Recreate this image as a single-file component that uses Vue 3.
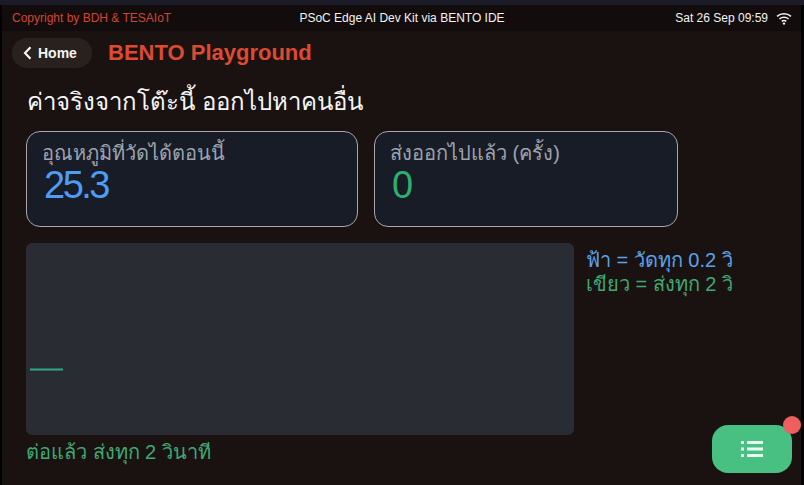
<template>
  <div class="screen">
    <div class="status">
      <span class="copy">Copyright by BDH &amp; TESAIoT</span>
      <span class="device">PSoC Edge AI Dev Kit via BENTO IDE</span>
      <span class="clock">
        Sat 26 Sep 09:59
        <svg width="16" height="13" viewBox="0 0 16 13" fill="none" stroke="#f2f2f2" stroke-width="1.5">
          <path d="M1 4.4C5 .9 11 .9 15 4.4" />
          <path d="M3.4 7C6 4.8 10 4.8 12.6 7" />
          <path d="M5.7 9.4C7 8.4 9 8.4 10.3 9.4" />
          <circle cx="8" cy="11.6" r="1.2" fill="#f2f2f2" stroke="none" />
        </svg>
      </span>
    </div>

    <div class="nav">
      <button class="home">
        <svg width="9" height="14" viewBox="0 0 9 14" fill="none" stroke="#f4f4f4" stroke-width="2.2">
          <path d="M7.5 1.2 2 7l5.500 5.800" />
        </svg>
        Home
      </button>
      <span class="title">BENTO Playground</span>
    </div>

    <main class="content">
      <h1>{{ heading }}</h1>
      <div class="cards">
        <div class="card" v-for="card in cards" :key="card.label" :class="card.kind">
          <p class="label">{{ card.label }}</p>
          <p class="value">{{ card.value }}</p>
        </div>
      </div>
      <div class="chart-row">
        <div class="chart">
          <svg width="548" height="192" viewBox="0 0 548 192">
            <path d="M4 126.500H37" stroke="#35a888" stroke-width="2" />
          </svg>
        </div>
        <div class="legend">
          <p class="blue">ฟ้า = วัดทุก 0.2 วิ</p>
          <p class="green">เขียว = ส่งทุก 2 วิ</p>
        </div>
      </div>
      <p class="note">ต่อแล้ว ส่งทุก 2 วินาที</p>
    </main>

    <button class="fab">
      <svg width="22" height="16" viewBox="0 0 22 16" fill="#eafff3">
        <rect x="0" y="0" width="3" height="3" />
        <rect x="0" y="6.500" width="3" height="3" />
        <rect x="0" y="13" width="3" height="3" />
        <rect x="6" y="0" width="16" height="3" />
        <rect x="6" y="6.500" width="16" height="3" />
        <rect x="6" y="13" width="16" height="3" />
      </svg>
      <span class="badge"></span>
    </button>
  </div>
</template>

<script setup>
const heading = 'ค่าจริงจากโต๊ะนี้ ออกไปหาคนอื่น'
const cards = [
  { label: 'อุณหภูมิที่วัดได้ตอนนี้', value: '25.3', kind: 'temp' },
  { label: 'ส่งออกไปแล้ว (ครั้ง)', value: '0', kind: 'sent' },
]
</script>

<style>
html, body {
  margin: 0;
  background: #000;
}
</style>

<style scoped>
.screen {
  position: relative;
  box-sizing: border-box;
  width: 804px;
  height: 485px;
  overflow: hidden;
  padding: 5px 3px 2px 2px;
  background: #000;
  font-family: "Liberation Sans", "Noto Sans", sans-serif;
  color: #f2f2f2;
  background-image: linear-gradient(#1b1c27 5px, transparent 5px);
}

.status {
  display: grid;
  grid-template-columns: 1fr auto 1fr;
  align-items: center;
  height: 26px;
  padding: 0 9px 0 10px;
  font-size: 12px;
  background: #120d0c;
}

.copy {
  color: #d0452f;
}

.clock {
  display: flex;
  justify-content: flex-end;
  align-items: center;
  gap: 8px;
}

.nav {
  display: flex;
  align-items: center;
  gap: 16px;
  height: 43px;
  padding: 0 0 0 10px;
  background: #1a1210;
}

.home {
  display: flex;
  align-items: center;
  gap: 6px;
  box-sizing: border-box;
  width: 80px;
  height: 30px;
  padding: 0 0 0 11px;
  border: 0;
  border-radius: 15px;
  background: #28211d;
  color: #f4f4f4;
  font: bold 14px "Liberation Sans", sans-serif;
}

.title {
  font-size: 22px;
  font-weight: bold;
  color: #dc4a30;
}

.content {
  height: 411px;
  padding: 0 0 0 24px;
  background: #1a1210;
}

h1 {
  margin: 0;
  height: 57px;
  padding: 12px 0 0 1px;
  box-sizing: border-box;
  font-size: 24px;
  font-weight: 400;
  line-height: 32px;
  color: #f5f5f5;
}

.cards {
  display: flex;
  gap: 16px;
}

.card {
  box-sizing: border-box;
  height: 96px;
  padding: 8px 15px;
  border: 1px solid #a8a8a8;
  border-radius: 14px;
  background: #171c26;
}

.card.temp {
  width: 332px;
}

.card.sent {
  width: 304px;
}

.label {
  margin: 0;
  font-size: 20px;
  line-height: 27px;
  color: #9ca3af;
}

.value {
  margin: 0 0 0 2px;
  font-size: 38px;
  line-height: 36px;
  font-family: "Liberation Sans", sans-serif;
  letter-spacing: -2.5px;
}

.temp .value {
  color: #4e9cf5;
}

.sent .value {
  color: #2fae6e;
}

.chart-row {
  display: flex;
  gap: 12px;
  margin-top: 16px;
}

.chart {
  width: 548px;
  height: 192px;
  border-radius: 6px;
  background: #292d33;
}

.chart svg {
  display: block;
}

.legend {
  padding-top: 5px;
  font-size: 20px;
  line-height: 24px;
}

.legend p {
  margin: 0;
}

.blue {
  color: #5aa2ec;
}

.green {
  color: #3fa873;
}

.note {
  margin: 4px 0 0;
  font-size: 20px;
  line-height: 27px;
  color: #3fa873;
}

.fab {
  position: absolute;
  left: 712px;
  top: 425px;
  display: flex;
  align-items: center;
  justify-content: center;
  width: 80px;
  height: 48px;
  padding: 0;
  border: 0;
  border-radius: 16px;
  background: #47c081;
}

.badge {
  position: absolute;
  right: -9px;
  top: -9px;
  width: 18px;
  height: 18px;
  border-radius: 50%;
  background: #ee5f5f;
}
</style>
